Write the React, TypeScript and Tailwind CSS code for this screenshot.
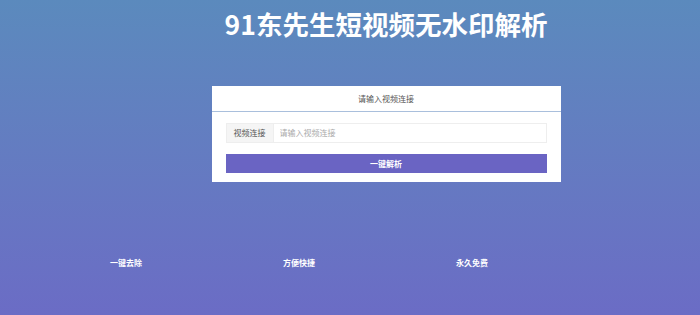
const font = { fontFamily: '"Noto Sans CJK SC", "Noto Sans", sans-serif' };

export default function App() {
  return (
    <div
      style={font}
      className="h-[315px] w-[700px] overflow-hidden bg-gradient-to-b from-[#5b8abd] to-[#6b6cc5]"
    >
      <div className="pl-[72px]">
        <h1 className="pt-[8px] text-center text-[26.5px] font-bold leading-[32px] text-white">
          91东先生短视频无水印解析
        </h1>

        <div className="mx-auto mt-[46px] w-[349px] bg-white">
          <div className="flex h-[26px] items-center justify-center border-b border-[#a9bfdc] text-[8px] text-[#555]">
            请输入视频连接
          </div>
          <div className="px-[14px] pt-[11px] pb-[9px]">
            <div className="flex h-[20px] border border-[#eeeeee]">
              <span className="flex w-[47px] items-center justify-center border-r border-[#eeeeee] bg-[#f5f5f5] text-[8px] text-[#555]">
                视频连接
              </span>
              <input
                className="flex-1 px-[6px] text-[8px] text-[#555] outline-none placeholder:text-[#aaa]"
                placeholder="请输入视频连接"
              />
            </div>
            <button
              type="button"
              className="mt-[11px] flex h-[19px] w-full items-center justify-center bg-[#6a64c3] text-[8px] font-bold text-white"
            >
              一键解析
            </button>
          </div>
        </div>
      </div>

      <div className="mt-[75px] flex pl-[110px] text-[8px] font-bold text-white">
        <div className="w-[173px]">一键去除</div>
        <div className="w-[173px]">方便快捷</div>
        <div className="w-[173px]">永久免费</div>
      </div>
    </div>
  );
}
